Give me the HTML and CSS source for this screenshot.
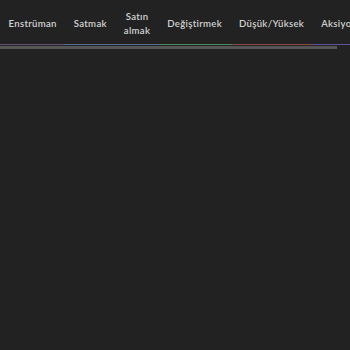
FILE: index.html
```html
<!DOCTYPE html>
<html lang="tr">
<head>
    <meta charset="UTF-8">
    <meta name="viewport" content="width=device-width, initial-scale=1.0">
    <title>Menü</title>
    <link rel="stylesheet" href="styles.css">
</head>
<body>
    <nav class="topnav">
        <a class="nav-item" href="#">Enstrüman</a>
        <a class="nav-item" href="#">Satmak</a>
        <a class="nav-item" href="#">Satın almak</a>
        <a class="nav-item" href="#">Değiştirmek</a>
        <a class="nav-item" href="#">Düşük/Yüksek</a>
        <a class="nav-item" href="#">Aksiyon</a>
    </nav>
    <div class="color-line">
        <span class="seg seg-purple"></span>
        <span class="seg seg-blue"></span>
        <span class="seg seg-green"></span>
        <span class="seg seg-red"></span>
        <span class="seg seg-indigo"></span>
    </div>
    <div class="progress"></div>
</body>
</html>
```

FILE: styles.css
```css
/* Basis */
body {
    margin: 0;
    padding: 0;
    background-color: #222222;
    font-family: Lato, 'Open Sans', sans-serif;
    overflow: hidden;
}

/* Navigatie */
.topnav {
    box-sizing: border-box;
    display: flex;
    align-items: center;
    height: 44px;
    width: 350px;
    padding-top: 3px;
}
.nav-item {
    padding: 0 8.5px;
    color: #d2d2d2;
    text-decoration: none;
    font-size: 9.6px;
    font-weight: 600;
    letter-spacing: 0.3px;
    line-height: 14px;
    text-align: center;
}

/* Gekleurde lijn */
.color-line {
    display: flex;
    height: 1px;
}
.seg {
    display: block;
    height: 1px;
}
.seg-purple { width: 64px; background-color: #6a4f74; }
.seg-blue { width: 96px; background-color: #55728f; }
.seg-green { width: 72px; background-color: #4b8a5e; }
.seg-red { width: 80px; background-color: #8a4c44; }
.seg-indigo { flex: 1; background-color: #5b54a0; }

.progress {
    margin-top: 1px;
    width: 337px;
    height: 3px;
    background-color: #565656;
}
```
